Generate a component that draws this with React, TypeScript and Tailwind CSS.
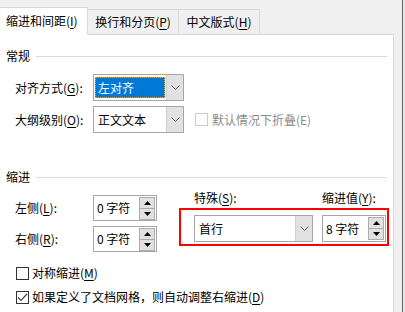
import React from "react";

function U({ children }: { children: React.ReactNode }) {
  return <span className="underline underline-offset-[2px] decoration-1">{children}</span>;
}

function Chevron() {
  return (
    <svg width="9" height="5" viewBox="0 0 9 5">
      <path d="M0.5 0.5 L4.5 4.5 L8.5 0.5" fill="none" stroke="#606060" strokeWidth="1" />
    </svg>
  );
}

function Arrow({ up }: { up?: boolean }) {
  return (
    <svg width="7" height="4" viewBox="0 0 7 4">
      <path d={up ? "M0 4 L3.5 0 L7 4 Z" : "M0 0 L3.5 4 L7 0 Z"} fill="#000" />
    </svg>
  );
}

function Select({ value, selected, w }: { value: string; selected?: boolean; w: string }) {
  return (
    <div className={`flex h-[27px] border border-[#a6a6a6] bg-white ${w}`}>
      <div className="flex flex-1 px-[1px] py-[2px]">
        {selected ? (
          <div className="flex flex-1 items-center border border-dotted border-[#f5a623] bg-[#0078d7] pl-[2px] text-white">
            {value}
          </div>
        ) : (
          <div className="flex flex-1 items-center pl-[3px]">{value}</div>
        )}
      </div>
      <div className="flex w-[17px] items-center justify-center border-l border-[#cfcfcf] bg-[#e1e1e1]">
        <Chevron />
      </div>
    </div>
  );
}

function Spin({ value }: { value: string }) {
  return (
    <div className="flex h-[26px] w-[64px] items-center border border-[#a6a6a6] bg-white">
      <div className="flex-1 pl-[3px]">{value}</div>
      <div className="mr-[1px] flex w-[16px] flex-col">
        <div className="flex h-[12px] items-center justify-center border border-[#adadad] bg-[#e1e1e1]">
          <Arrow up />
        </div>
        <div className="mt-[-1px] flex h-[12px] items-center justify-center border border-[#adadad] bg-[#e1e1e1]">
          <Arrow />
        </div>
      </div>
    </div>
  );
}

function CheckBox({ checked, disabled }: { checked?: boolean; disabled?: boolean }) {
  return (
    <div
      className={`flex h-[13px] w-[13px] items-center justify-center border bg-white ${
        disabled ? "border-[#cccccc]" : "border-[#333333]"
      }`}
    >
      {checked && (
        <svg width="11" height="9" viewBox="0 0 11 9">
          <path d="M1 4.5 L4 7.5 L10 1" fill="none" stroke="#444" strokeWidth="1.2" />
        </svg>
      )}
    </div>
  );
}

function SectionHeader({ title }: { title: string }) {
  return (
    <div className="flex h-[16px] items-center pl-[6px] pr-[6px]">
      <span>{title}</span>
      <div className="ml-[6px] h-px flex-1 bg-[#dcdcdc]" />
    </div>
  );
}

export default function App() {
  return (
    <div className="flex h-[312px] w-[405px] overflow-hidden bg-[#f0f0f0] font-['Noto_Sans_CJK_SC',sans-serif] text-[12px] leading-[16px] text-black">
      <div className="flex w-[402px] flex-col">
        {/* Tabs */}
        <div className="flex h-[34px] items-end">
          <div className="relative z-10 mb-[-1px] flex h-[28px] w-[88px] items-center border-r border-t border-[#d9d9d9] bg-white pl-[6px] pb-[1px]">
            缩进和间距(<U>I</U>)
          </div>
          <div className="flex h-[25px] w-[91px] items-center justify-center border-t border-r border-[#d9d9d9]">
            换行和分页(<U>P</U>)
          </div>
          <div className="flex h-[25px] w-[81px] items-center justify-center border-t border-r border-[#d9d9d9]">
            中文版式(<U>H</U>)
          </div>
        </div>

        {/* Panel */}
        <div className="flex w-[394px] flex-1 flex-col border-r border-t border-[#d9d9d9] bg-white">
          <div className="mt-[13px]">
            <SectionHeader title="常规" />
          </div>

          <div className="mt-[10px] flex items-center pl-[15px]">
            <div className="w-[78px]">
              对齐方式(<U>G</U>):
            </div>
            <Select value="左对齐" selected w="w-[91px]" />
          </div>

          <div className="mt-[5px] flex items-center pl-[15px]">
            <div className="w-[78px]">
              大纲级别(<U>O</U>):
            </div>
            <Select value="正文文本" w="w-[91px]" />
            <div className="ml-[11px] flex items-center gap-[4px] text-[#8c8c8c]">
              <CheckBox disabled />
              <span>默认情况下折叠(E)</span>
            </div>
          </div>

          <div className="mt-[36px]">
            <SectionHeader title="缩进" />
          </div>

          <div className="flex pl-[15px]">
            <div className="flex flex-col">
              <div className="mt-[10px] flex items-center">
                <div className="w-[78px]">
                  左侧(<U>L</U>):
                </div>
                <Spin value="0 字符" />
              </div>
              <div className="mt-[5px] flex items-center">
                <div className="w-[78px]">
                  右侧(<U>R</U>):
                </div>
                <Spin value="0 字符" />
              </div>
            </div>

            <div className="ml-[22px] flex flex-col">
              <div className="mt-[5px] flex h-[16px] pl-[15px]">
                <div className="w-[128px]">
                  特殊(<U>S</U>):
                </div>
                <div>
                  缩进值(<U>Y</U>):
                </div>
              </div>
              <div className="mt-[2px] flex h-[38px] w-[210px] items-start border-2 border-[#ff0000] pl-[13px] pt-[5px]">
                <Select value="首行" w="w-[119px]" />
                <div className="ml-[9px]">
                  <div className="h-[27px] [&>div]:h-[27px]">
                    <Spin value="8 字符" />
                  </div>
                </div>
              </div>
            </div>
          </div>

          <div className="mt-[13px] flex items-center gap-[3px] pl-[16px]">
            <CheckBox />
            <span>
              对称缩进(<U>M</U>)
            </span>
          </div>
          <div className="mt-[8px] flex items-center gap-[3px] pl-[16px]">
            <CheckBox checked />
            <span>
              如果定义了文档网格，则自动调整右缩进(<U>D</U>)
            </span>
          </div>
        </div>
      </div>

      {/* Edge of the window behind */}
      <div className="h-full w-px bg-[#646464]" />
      <div className="h-full flex-1 bg-[#e6e6e6]" />
    </div>
  );
}
